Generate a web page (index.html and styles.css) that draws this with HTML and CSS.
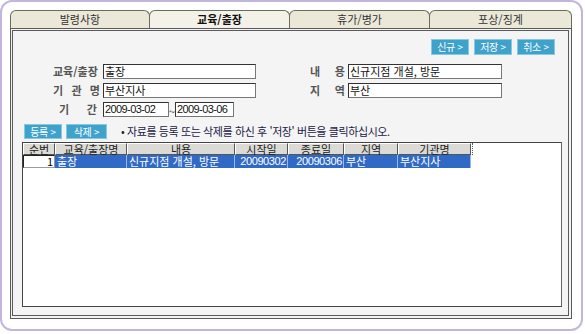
FILE: index.html
```html
<!DOCTYPE html>
<html lang="ko">
<head>
<meta charset="utf-8">
<link rel="stylesheet" href="styles.css">
</head>
<body>
<div class="frame">
  <div class="tabs">
    <div class="tab">발령사항</div>
    <div class="tab active">교육/출장</div>
    <div class="tab">휴가/병가</div>
    <div class="tab last">포상/징계</div>
  </div>
  <div class="panel">
    <div class="toolbar">
      <span class="btn">신규 &gt;</span>
      <span class="btn">저장 &gt;</span>
      <span class="btn">취소 &gt;</span>
    </div>
    <div class="form">
      <span class="lbl">교육/출장</span>
      <span class="inp">출장</span>
      <span class="lbl r">내 용</span>
      <span class="inp">신규지점 개설, 방문</span>

      <span class="lbl">기 관 명</span>
      <span class="inp">부산지사</span>
      <span class="lbl r">지 역</span>
      <span class="inp">부산</span>

      <span class="lbl short">기 간</span>
      <span class="dates">
        <span class="inp date d1">2009-03-02</span>
        <span class="tilde">~</span>
        <span class="inp date d2">2009-03-06</span>
      </span>
    </div>
    <div class="actions">
      <span class="btn">등록 &gt;</span>
      <span class="btn">삭제 &gt;</span>
      <span class="note">• 자료를 등록 또는 삭제를 하신 후 '저장' 버튼을 클릭하십시오.</span>
    </div>
    <div class="grid">
      <div class="row head">
        <span class="c c1">순번</span>
        <span class="c c2">교육/출장명</span>
        <span class="c c3">내용</span>
        <span class="c c4">시작일</span>
        <span class="c c5">종료일</span>
        <span class="c c6">지역</span>
        <span class="c c7">기관명</span>
        <span class="grip"></span>
      </div>
      <div class="row sel">
        <span class="c c1 num">1</span>
        <span class="c c2">출장</span>
        <span class="c c3">신규지점 개설, 방문</span>
        <span class="c c4 rt">20090302</span>
        <span class="c c5 rt">20090306</span>
        <span class="c c6">부산</span>
        <span class="c c7">부산지사</span>
      </div>
    </div>
  </div>
</div>
</body>
</html>
```

FILE: styles.css
```css
* { box-sizing: border-box; }
html, body { margin: 0; padding: 0; background: #fff; }
body {
  font-family: "Noto Sans CJK KR", "Liberation Sans", sans-serif;
  font-size: 11px;
  color: #222;
}
.frame {
  width: 583px;
  height: 331px;
  border: 2px solid #c3b6de;
  border-radius: 12px;
  padding: 8px 0 0 8px;
}
.tabs {
  display: flex;
  height: 18px;
}
.tab {
  width: 140px;
  height: 18px;
  background: #ebe8d7;
  border: 1px solid #6b6b60;
  border-bottom: none;
  border-radius: 6px 6px 0 0;
  text-align: center;
  line-height: 16px;
  color: #333;
}
.tab + .tab { margin-left: -1px; width: 141px; }
.tab.last { width: 143px; }
.tab.active {
  background: #f4f2e8;
  font-weight: bold;
  color: #111;
}
.panel {
  width: 562px;
  height: 291px;
  border: 3px double #5a5a5a;
  border-right-width: 4px;
  border-bottom-width: 4px;
  background: #f4f4f4;
  padding: 8px 9px 0 9px;
  display: flex;
  flex-direction: column;
}
.toolbar {
  display: flex;
  justify-content: flex-end;
  gap: 5px;
  height: 16px;
  padding-right: 4px;
}
.btn {
  display: inline-block;
  width: 38px;
  height: 16px;
  background: #3ea2cb;
  border: 1px solid #86c9e3;
  color: #fff;
  font-size: 10px;
  line-height: 14px;
  text-align: center;
  letter-spacing: -0.3px;
}
.form {
  margin-top: 9px;
  padding-left: 31px;
  display: grid;
  grid-template-columns: 47px 153px 86px 154px;
  column-gap: 3px;
  row-gap: 4px;
  grid-auto-rows: 15px;
}
.lbl {
  font-weight: bold;
  color: #555;
  line-height: 15px;
  text-align: justify;
  text-align-last: justify;
  white-space: normal;
}
.lbl.short { padding-left: 6px; padding-right: 3px; }
.lbl.r { margin-left: 51px; }
.inp {
  display: block;
  height: 15px;
  background: #fff;
  border: 1px solid #333;
  border-right-color: #777;
  border-bottom-color: #777;
  line-height: 13px;
  padding-left: 1px;
  color: #111;
  white-space: nowrap;
  overflow: hidden;
}
.dates {
  display: flex;
  align-items: center;
  grid-column: 2 / 4;
}
.date {
  font-family: "Liberation Sans Narrow", "Liberation Sans", sans-serif;
  font-size: 11px;
  letter-spacing: -0.6px;
}
.d1 { width: 66px; }
.d2 { width: 59px; }
.tilde { width: 6px; text-align: center; color: #333; line-height: 15px; padding-top: 3px; }
.actions {
  margin-top: 7px;
  padding-left: 2px;
  display: flex;
  align-items: center;
  gap: 4px;
  height: 15px;
}
.actions .btn { height: 15px; line-height: 13px; }
.actions .btn + .btn { width: 41px; }
.note {
  margin-left: 10px;
  color: #222046;
  letter-spacing: -0.4px;
  white-space: nowrap;
  line-height: 15px;
}
.grid {
  margin-top: 3px;
  width: 540px;
  height: 165px;
  background: #fff;
  border: 1px solid #444;
  border-right-color: #666;
  padding: 0;
}
.row {
  display: flex;
  height: 12px;
}
.c {
  display: block;
  white-space: nowrap;
  overflow: visible;
  line-height: 12px;
}
.c1 { width: 32px; }
.c2 { width: 72px; }
.c3 { width: 108px; }
.c4 { width: 53px; }
.c5 { width: 56px; }
.c6 { width: 54px; }
.c7 { width: 73px; }
.head .c {
  background: #dcdad4;
  border-top: 1px solid #fff;
  border-left: 1px solid #fff;
  border-right: 1px solid #555;
  border-bottom: 1px solid #555;
  text-align: center;
  color: #222;
  height: 12px;
  line-height: 10px;
}
.grip {
  width: 4px;
  height: 12px;
  border-left: 1px dotted #555;
  margin-left: 1px;
}
.row.sel { height: 13px; }
.sel .c {
  background: #3169c6;
  color: #fff;
  border-right: 1px solid #9cb6e6;
  padding-left: 2px;
  line-height: 12px;
  height: 13px;
  overflow: visible;
}
.sel .c.rt { text-align: right; padding-right: 1px; font-family: "Liberation Sans Narrow", "Liberation Sans", sans-serif; letter-spacing: -0.4px; }
.sel .c1.num {
  background: #fff;
  color: #000;
  text-align: right;
  border: 1px solid #999;
  border-top-color: #222;
  border-left-color: #222;
  padding-right: 1px;
  line-height: 11px;
}
```
